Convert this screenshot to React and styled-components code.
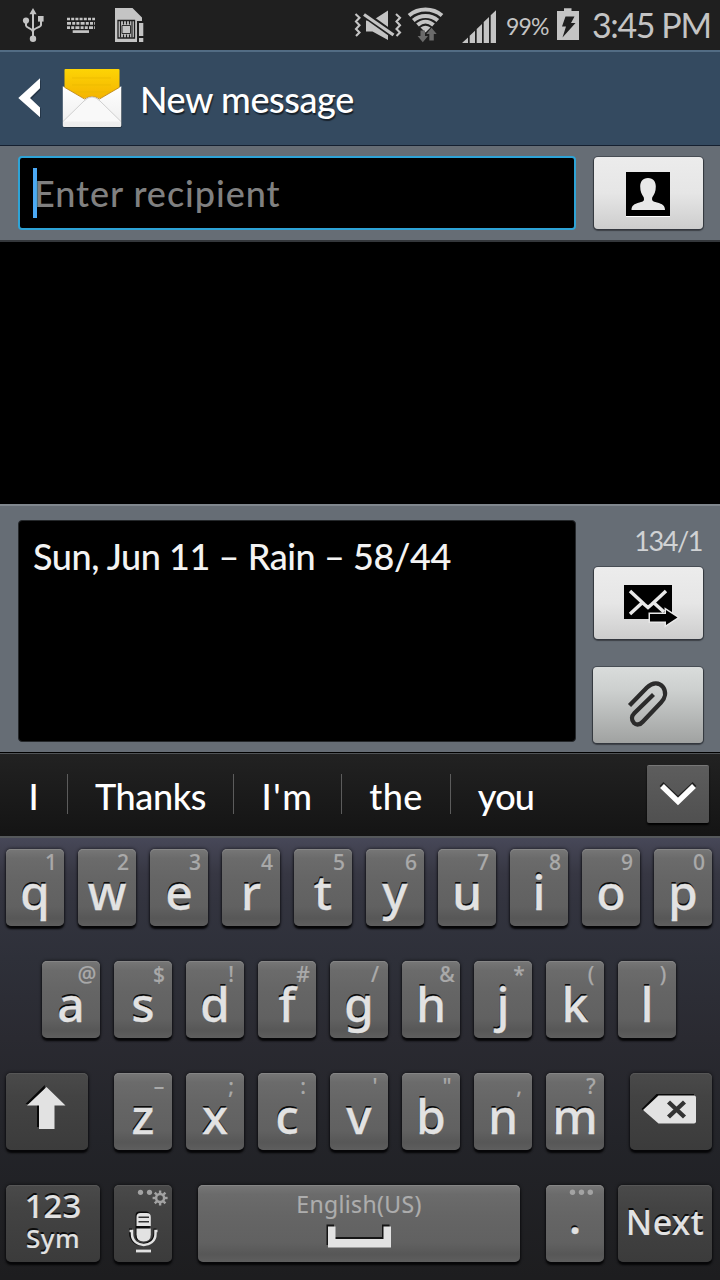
import React from "react";
import styled, { createGlobalStyle, css } from "styled-components";

const GlobalStyle = createGlobalStyle`
  * { box-sizing: border-box; }
  body { margin: 0; background: #000; }
`;

const hand = css`
  font-family: Lato, "Open Sans", sans-serif;
  white-space: pre;
`;
const keyFont = css`
  font-family: "Noto Sans", "Open Sans", sans-serif;
`;

const Screen = styled.div`
  width: 720px;
  height: 1280px;
  display: flex;
  flex-direction: column;
  overflow: hidden;
  background: #000;
`;

const StatusBar = styled.header`
  height: 50px;
  flex: none;
  display: flex;
  align-items: flex-start;
  background: #1f1f1f;
  color: #c4c4c4;
`;
const Glyph = styled.svg`
  display: block;
  flex: none;
  overflow: visible;
  margin-left: ${(p) => p.$gap || 0}px;
`;
const DotsGlyph = styled(Glyph)`
  grid-area: 1 / 1;
`;
const Percent = styled.span`
  ${hand}
  width: 51px;
  margin-left: 10px;
  font-size: 23px;
  line-height: 53px;
  letter-spacing: -0.9px;
`;
const Clock = styled.span`
  ${hand}
  margin-left: 13px;
  font-size: 34px;
  line-height: 49px;
  letter-spacing: -1.4px;
`;

const TitleBar = styled.div`
  height: 96px;
  flex: none;
  display: flex;
  align-items: flex-start;
  background: #344a60;
  border-top: 2px solid #526c84;
  border-bottom: 1px solid #152030;
`;
const Title = styled.h1`
  ${hand}
  margin: 0 0 0 18px;
  font-size: 36px;
  font-weight: 500;
  line-height: 94px;
  letter-spacing: -0.4px;
  color: #fff;
  text-shadow: 1px 2px 1px rgba(0, 0, 0, 0.55);
`;

const RecipientRow = styled.div`
  height: 96px;
  flex: none;
  display: flex;
  gap: 18px;
  padding: 10px 17px 0 18px;
  background: #666d75;
  border-bottom: 2px solid #34373b;
`;
const RecipientField = styled.div`
  width: 558px;
  height: 74px;
  display: flex;
  align-items: center;
  padding-left: 13px;
  background: #000;
  border: 2px solid #2ea3d6;
  border-radius: 4px;
`;
const Caret = styled.span`
  width: 4px;
  height: 50px;
  background: #4ba9f5;
`;
const Placeholder = styled.span`
  ${hand}
  margin-left: -3px;
  font-size: 36px;
  font-weight: 500;
  line-height: 72px;
  letter-spacing: 0.95px;
  color: #808080;
`;
const ActionButton = styled.button`
  width: ${(p) => (p.$muted ? 110 : 109)}px;
  height: ${(p) => (p.$muted ? 76 : 72)}px;
  display: flex;
  padding: 0;
  border: 0;
  border-radius: 4px;
  background: ${(p) =>
    p.$muted
      ? "linear-gradient(#d9dcdb, #cdd0cf 30%, #a0a2a1)"
      : "linear-gradient(#ececec, #e6e6e6 50%, #cdcdcd)"};
  box-shadow: 0 0 0 1px rgba(40, 44, 50, 0.45), 0 1px 1px 1px rgba(20, 22, 26, 0.5);
  margin-top: ${(p) => p.$top || 0}px;
`;

const Conversation = styled.main`
  height: 262px;
  flex: none;
`;

const Composer = styled.section`
  height: 248px;
  flex: none;
  display: flex;
  gap: 17px;
  padding: 14px 17px 0 18px;
  background: #666d75;
  border-top: 2px solid #80878e;
`;
const MessageBox = styled.div`
  ${hand}
  width: 558px;
  height: 222px;
  padding: 17px 0 0 14px;
  background: #000;
  border: 1px solid #25282b;
  border-radius: 4px;
  font-size: 36px;
  font-weight: 500;
  line-height: 36px;
  letter-spacing: -0.43px;
  color: #f3f3f3;
`;
const SideActions = styled.div`
  flex: 1;
  display: flex;
  flex-direction: column;
  align-items: flex-end;
`;
const Counter = styled.span`
  ${hand}
  height: 47px;
  font-size: 27px;
  line-height: 42px;
  letter-spacing: -1.4px;
  padding-right: 1px;
  color: #d0d2d4;
`;

const Suggestions = styled.nav`
  height: 86px;
  flex: none;
  display: flex;
  align-items: center;
  padding-bottom: 2px;
  background: linear-gradient(#222, #141414);
  border-top: 1px solid #000;
  border-bottom: 2px solid #55585b;
  box-shadow: inset 0 1px #505356;
`;
const Suggestion = styled.span`
  ${hand}
  width: ${(p) => p.$w}px;
  height: 40px;
  text-align: center;
  font-size: 36px;
  font-weight: 500;
  line-height: 44px;
  letter-spacing: ${(p) => p.$track || 0}px;
  color: #fff;
  border-right: ${(p) => (p.$last ? "0" : "1px solid #5c5c5c")};
`;
const CollapseButton = styled.button`
  width: 62px;
  height: 58px;
  margin: 0 11px 0 auto;
  padding: 0;
  display: flex;
  border: 0;
  border-top: 1px solid #777;
  border-radius: 2px;
  background: linear-gradient(#5d5d5d, #505050);
  box-shadow: 0 2px 2px #000;
`;

const Keyboard = styled.section`
  flex: 1;
  display: flex;
  flex-direction: column;
  gap: 35px;
  padding-top: 11px;
  background: linear-gradient(#474858, #373743 35px, #33343f 60px, #2e3039 120px, #2a2a31 200px, #232429 300px, #1d1d1f 440px);
`;
const KeyRow = styled.div`
  height: 77px;
  display: flex;
  gap: 14px;
  padding-left: ${(p) => p.$indent || 6}px;
`;
const Key = styled.button`
  ${keyFont}
  width: ${(p) => p.$w || 58}px;
  height: 77px;
  flex: none;
  margin: 0 ${(p) => p.$after || 0}px 0 ${(p) => p.$before || 0}px;
  padding: 0;
  display: grid;
  align-items: start;
  justify-items: stretch;
  grid-template-columns: 100%;
  border: 0;
  border-radius: 5px;
  color: #e2e2e2;
  background: ${(p) =>
    p.$dark
      ? "linear-gradient(#4a4a4a, #434343 30%, #3d3d3d 85%, #3b3b3b)"
      : "linear-gradient(#777, #6b6b6b 12%, #656565 40%, #616161 75%, #575757 90%, #5e5e5e)"};
  box-shadow: inset 0 1px ${(p) => (p.$dark ? "#565656" : "#858585")}, 0 3px 2px #060608,
    0 0 3px 1px rgba(0, 0, 0, 0.4);
`;
const Letter = styled.span`
  grid-area: 1 / 1;
  height: 77px;
  font-size: 48px;
  font-weight: 500;
  line-height: ${(p) => p.$line || 86}px;
  text-align: center;
  -webkit-text-stroke: 0.3px #e2e2e2;
  text-shadow: -0.5px -2px 0 #0c0c0c;
`;
const Hint = styled.span`
  grid-area: 1 / 1;
  width: 26px;
  margin-left: 32px;
  font-size: 21px;
  font-weight: 500;
  line-height: 27px;
  text-align: center;
  color: #a9a9a9;
  -webkit-text-stroke: 0.15px #a9a9a9;
`;
const KeyLabel = styled.span`
  font-size: ${(p) => p.$size}px;
  line-height: ${(p) => p.$line}px;
  height: ${(p) => p.$h}px;
  font-weight: 500;
  text-align: center;
  letter-spacing: ${(p) => p.$track || 0}px;
  -webkit-text-stroke: 0.15px #e2e2e2;
  text-shadow: -0.5px -2px 0 #0c0c0c;
`;
const SpaceLabel = styled(KeyLabel)`
  font-weight: 400;
  color: #adadad;
  -webkit-text-stroke: 0.15px #adadad;
  text-shadow: none;
`;

const Usb = () => (
  <Glyph $gap={20} width="26" height="50" viewBox="20 0 26 50" fill="#c4c4c4">
    <path d="M33 8l3.6 6.2h-7.2z" />
    <path d="M33 13v26M26 21v4.5c0 2.5 7 3 7 6.500M41 19v6c0 2.500-8 3-8 6.500" fill="none" stroke="#c4c4c4" strokeWidth="2" />
    <circle cx="33" cy="38.800" r="3.200" />
    <circle cx="26" cy="20.500" r="3.100" />
    <path d="M38 16h5.600v5.600H38z" />
  </Glyph>
);
const KeyboardGlyph = () => (
  <Glyph $gap={21} width="28" height="50" viewBox="67 0 28 50" stroke="#c4c4c4" strokeWidth="2.700">
    <path d="M67 19H95" strokeDasharray="3 1.200" />
    <path d="M67 23.300H95" strokeDasharray="4 1.200 3 1.200 3 1.200" />
    <path d="M67 27.600H95" strokeDasharray="3 1.200 3 1.200 4 1.200" />
    <path d="M72.700 31.600H89" />
  </Glyph>
);
const SimAlert = () => (
  <Glyph $gap={20} width="29" height="50" viewBox="115 0 29 50">
    <path d="M115 8h17.500l9.500 9.500V21h-5v21h-22z" fill="#c4c4c4" />
    <path d="M118 20.500h16.500V38H118z" fill="none" stroke="#1f1f1f" strokeWidth="1.300" />
    <path d="M120.500 21v16.500M132 21v16.500M123.500 21v3.500M126.500 21v3.500M129.500 21v3.500M123.500 34.500V38M126.500 34.500V38M129.500 34.500V38" stroke="#1f1f1f" strokeWidth="1.200" />
    <path d="M122 25.500h8.500V33.500H122z" fill="none" stroke="#1f1f1f" strokeWidth="0.900" />
    <path d="M139 23h4.300v13H139zM139 38h4.300v4H139z" fill="#c4c4c4" />
  </Glyph>
);
const MuteVibrate = () => (
  <Glyph $gap={211} width="46" height="50" viewBox="355 0 46 50">
    <path d="M366 20.500h6.500L388 10.500V40l-15.500-8.500H366z" fill="#c4c4c4" />
    <path d="M364 14l29.500 21" stroke="#1f1f1f" strokeWidth="6.800" />
    <path d="M364 14.500l29.500 20.500" stroke="#c4c4c4" strokeWidth="3.300" />
    <path d="M355.500 14l4 3.700-3.500 3.800 3.500 3.700-3.500 3.800 3.500 3.500-3.500 3.500M396 14l4 3.700-3.500 3.800 3.500 3.700-3.500 3.800 3.500 3.500-3.500 3.500" fill="none" stroke="#c4c4c4" strokeWidth="2.100" />
  </Glyph>
);
const Wifi = () => (
  <Glyph $gap={7} width="35" height="50" viewBox="408 0 35 50">
    <g fill="none" stroke="#c4c4c4" strokeWidth="4">
      <path d="M409 15.500c9.500-8 23.500-8 33 0" />
      <path d="M413.300 20.500c7-6 17.500-6 24.500 0" />
      <path d="M417.500 25c5-4.500 11-4.500 16 0" />
    </g>
    <path d="M420.500 27.500q5-3.500 10 0l-5 5z" fill="#c4c4c4" />
    <path d="M420.500 30.500h4.500V36h3l-5.200 6.300-5.200-6.300h2.900zM429.300 40.500h4.500V34h2.900l-5.200-6.300-5.200 6.300h3z" fill="#6a6a6a" />
  </Glyph>
);
const Signal = () => (
  <Glyph $gap={19} width="34" height="50" viewBox="462 0 34 50" fill="#c4c4c4">
    <path d="M462 43l6-5.500V43zM469.700 43v-7.200l5.300-5V43zM476.700 43V29l5.300-5V43zM483.700 43V22.100l5.300-5V43zM490.700 43V15.300l5.300-5V43z" />
  </Glyph>
);
const Battery = () => (
  <Glyph width="22" height="50" viewBox="557 0 22 50">
    <path d="M557 11h7V8.300h7.500V11h7.500v29h-22z" fill="#c4c4c4" />
    <path d="M565.500 16.500h9l-3.500 6.500h4.500l-13 14.500 3.500-11h-4z" fill="#1f1f1f" />
  </Glyph>
);

const BackArrow = () => (
  <Glyph $gap={18} width="24" height="94" viewBox="18 52 24 94">
    <path d="M41 80v9.500L31.500 99l9.500 9.500v10L20.500 99z" fill="#1d2a38" opacity=".6" />
    <path d="M40 78.300v10L30 98l10 9.500v9.800L18.300 98z" fill="#fff" />
  </Glyph>
);
const MessagesLogo = () => (
  <Glyph $gap={20} width="60" height="94" viewBox="62 52 60 94">
    <defs>
      <linearGradient id="paper" x2="0" y2="1">
        <stop stopColor="#fdd405" />
        <stop offset="1" stopColor="#f3b000" />
      </linearGradient>
      <linearGradient id="envelope" x2="0" y2="1">
        <stop stopColor="#fff" />
        <stop offset="1" stopColor="#ededed" />
      </linearGradient>
    </defs>
    <path d="M63 126q0 2 2 2h55q2 0 2-2V88H63z" fill="#24303c" opacity=".7" />
    <rect x="64.500" y="69" width="55" height="33" rx="1" fill="url(#paper)" />
    <path d="M72 78h39M72 85h39M72 92h39" stroke="#e9b900" strokeWidth=".7" />
    <path d="M62.800 86.300L84 98.500q8-4 16 0l21.300-12.200V125.500q0 1.500-1.500 1.500H64.300q-1.500 0-1.500-1.500z" fill="url(#envelope)" />
    <path d="M64.500 87.300L84.500 99q3-2.300 7.500-2.300t7.500 2.300l20-11.700" fill="none" stroke="#b87c08" strokeWidth=".8" />
    <path d="M63 121.500L84 101q8-8 16 0l21 20.500" fill="#f9f9f9" stroke="#d0d0d0" strokeWidth="1" />
  </Glyph>
);
const Contact = () => (
  <Glyph width="109" height="72" viewBox="594 157 109 72">
    <path d="M626 173h44v44h-44z" fill="#fff" />
    <path d="M626 172h44v44h-44z" />
    <path d="M648 178c5.500 0 7.800 3.800 7.800 8.500 0 5-1.500 8-3.500 10.700-.8 3.500.2 4 4.700 5.300 5.500 1.500 8 3 8 7.500h-33.500c0-4.500 2.500-6 8-7.500 4.500-1.300 5-1.800 4.200-5.300-2-2.700-3.500-5.700-3.500-10.700 0-4.700 2.300-8.500 7.800-8.500z" fill="#e8e8e8" />
  </Glyph>
);
const Send = () => (
  <Glyph width="109" height="72" viewBox="594 567 109 72">
    <path d="M624 585h48v34h-48z" />
    <path d="M630 591l14.500 13.500 3.500 3 3.500-3L666 591M630 614l12.500-11.500M653.500 602.500L664 612" fill="none" stroke="#e8e8e8" strokeWidth="3.500" />
    <path d="M650 614h16V610l11.500 7.500L666 625v-3.500h-16z" stroke="#e8e8e8" strokeWidth="3" />
    <path d="M650 614h16V610l11.500 7.500L666 625v-3.500h-16z" />
  </Glyph>
);
const Paperclip = () => (
  <Glyph width="110" height="76" viewBox="593 667 110 76">
    <path d="M629.500 705.500L647 687.500C653 681.500 659.500 682.500 663 687c3.500 5 2.300 11-2 15.500L643 721.500c-3 3.500-6.500 3.800-9 1.500-3-3-2.500-7 .5-10L653.500 694.500" fill="none" stroke="#2b2b2b" strokeWidth="4.300" />
  </Glyph>
);
const Chevron = () => (
  <Glyph width="62" height="57" viewBox="647 766 62 57" fill="none" strokeWidth="5.500">
    <path d="M661.500 784l16.500 15.500 16.500-15.500" stroke="#222" />
    <path d="M662 786l16 15.500 16-15.500" stroke="#fff" />
  </Glyph>
);
const Shift = () => (
  <Glyph width="82" height="77" viewBox="6 1073 82 77">
    <path d="M44.800 1085L25.500 1104H37v23h8z" fill="#080808" />
    <path d="M46.500 1087l19 18.500h-11V1129H39v-23.500H27z" fill="#e2e2e2" />
  </Glyph>
);
const Backspace = () => (
  <Glyph width="82" height="77" viewBox="630 1073 82 77">
    <path d="M641.500 1109L656.500 1094H694v5l-36 0-14 12z" fill="#080808" />
    <path d="M643 1110l15.500-14.500H694q2 0 2 2v24q0 2-2 2H658.500z" fill="#e2e2e2" />
    <path d="M668.500 1102l16 15M684.500 1102l-16 15" stroke="#333" strokeWidth="4.400" />
  </Glyph>
);
const teeth = [0, 45, 90, 135, 180, 225, 270, 315];
const Mic = () => (
  <Glyph width="58" height="77" viewBox="114 1185 58 77">
    <g fill="#a3a3a3">
      <circle cx="140.500" cy="1192.300" r="2.600" />
      <circle cx="149.500" cy="1192.300" r="2.600" />
      {teeth.map((a) => (
        <rect key={a} x="158.900" y="1190.500" width="2.400" height="4" transform={`rotate(${a} 160.100 1198)`} />
      ))}
    </g>
    <circle cx="160.100" cy="1198" r="4" fill="none" stroke="#a3a3a3" strokeWidth="2.500" />
    <g transform="translate(-1 -1.500)" fill="#0c0c0c">
      <rect x="136.500" y="1213" width="14.300" height="29" rx="4" />
      <path d="M131.500 1230v4c0 16 24.500 16 24.500 0v-4" fill="none" stroke="#0c0c0c" strokeWidth="3" />
    </g>
    <path d="M136.500 1226v-9q0-4 4-4h6.300q4 0 4 4v9z" fill="#e2e2e2" />
    <path d="M136.500 1228.500h14.300v6q0 7-7.100 7t-7.200-7z" fill="#e2e2e2" />
    <path d="M138.500 1217.200h10.500M138.500 1221.700h10.500" stroke="#333" strokeWidth="1.500" />
    <path d="M129.500 1231h2.500v3c0 14.500 23.500 14.500 23.500 0v-3h2" fill="none" stroke="#e2e2e2" strokeWidth="2.500" />
    <path d="M136 1251h15" stroke="#e2e2e2" strokeWidth="2.800" />
  </Glyph>
);
const SpaceMark = () => (
  <Glyph width="322" height="36" viewBox="198 1224 322 36">
    <path d="M326.500 1223.500h7.500V1236H382v-12.500h7.500V1244h-63z" fill="#151515" />
    <path d="M328 1225.500h7.500V1238h48v-12.500h7.500v21h-63z" fill="#e2e2e2" />
  </Glyph>
);
const MoreDots = () => (
  <DotsGlyph width="58" height="14" viewBox="546 1185 58 14" fill="#a3a3a3">
    <circle cx="572.500" cy="1192.300" r="2.700" />
    <circle cx="581.500" cy="1192.300" r="2.700" />
    <circle cx="590.300" cy="1192.300" r="2.700" />
  </DotsGlyph>
);

const CharKey = ({ pair, ...rest }) => (
  <Key {...rest}>
    <Hint>{pair[1]}</Hint>
    <Letter>{pair[0]}</Letter>
  </Key>
);

const topRow = ["q1", "w2", "e3", "r4", "t5", "y6", "u7", "i8", "o9", "p0"];
const homeRow = ["a@", "s$", "d!", "f#", "g/", "h&", "j*", "k(", "l)"];
const bottomRow = ["z–", "x;", "c:", "v'", 'b"', "n,", "m?"];

export default function App() {
  return (
    <Screen>
      <GlobalStyle />
      <StatusBar>
        <Usb />
        <KeyboardGlyph />
        <SimAlert />
        <MuteVibrate />
        <Wifi />
        <Signal />
        <Percent>99%</Percent>
        <Battery />
        <Clock>3:45 PM</Clock>
      </StatusBar>
      <TitleBar>
        <BackArrow />
        <MessagesLogo />
        <Title>New message</Title>
      </TitleBar>
      <RecipientRow>
        <RecipientField>
          <Caret />
          <Placeholder>Enter recipient</Placeholder>
        </RecipientField>
        <ActionButton $top={1}>
          <Contact />
        </ActionButton>
      </RecipientRow>
      <Conversation />
      <Composer>
        <MessageBox>Sun, Jun 11 – Rain – 58/44</MessageBox>
        <SideActions>
          <Counter>134/1</Counter>
          <ActionButton>
            <Send />
          </ActionButton>
          <ActionButton $muted $top={28}>
            <Paperclip />
          </ActionButton>
        </SideActions>
      </Composer>
      <Suggestions>
        <Suggestion $w={68}>I</Suggestion>
        <Suggestion $w={166} $track={-0.4}>Thanks</Suggestion>
        <Suggestion $w={108} $track={1.5}>I'm</Suggestion>
        <Suggestion $w={109} $track={0.5}>the</Suggestion>
        <Suggestion $w={110} $track={-0.8} $last>you</Suggestion>
        <CollapseButton>
          <Chevron />
        </CollapseButton>
      </Suggestions>
      <Keyboard>
        <KeyRow>
          {topRow.map((k) => (
            <CharKey key={k} pair={k} />
          ))}
        </KeyRow>
        <KeyRow $indent={42}>
          {homeRow.map((k) => (
            <CharKey key={k} pair={k} />
          ))}
        </KeyRow>
        <KeyRow>
          <Key $dark $w={82} $after={12}>
            <Shift />
          </Key>
          {bottomRow.map((k) => (
            <CharKey key={k} pair={k} />
          ))}
          <Key $dark $w={82} $before={12}>
            <Backspace />
          </Key>
        </KeyRow>
        <KeyRow>
          <Key $dark $w={94}>
            <KeyLabel $size={33} $line={42} $h={37}>123</KeyLabel>
            <KeyLabel $size={26} $line={33} $h={40} $track={0.4}>Sym</KeyLabel>
          </Key>
          <Key $dark>
            <Mic />
          </Key>
          <Key $w={322} $before={12} $after={12}>
            <SpaceLabel $size={23} $line={38} $h={39} $track={0.35}>English(US)</SpaceLabel>
            <SpaceMark />
          </Key>
          <Key>
            <MoreDots />
            <Letter $line={62}>.</Letter>
          </Key>
          <Key $dark $w={94}>
            <KeyLabel $size={34} $line={74} $h={77} $track={0.4}>Next</KeyLabel>
          </Key>
        </KeyRow>
      </Keyboard>
    </Screen>
  );
}
